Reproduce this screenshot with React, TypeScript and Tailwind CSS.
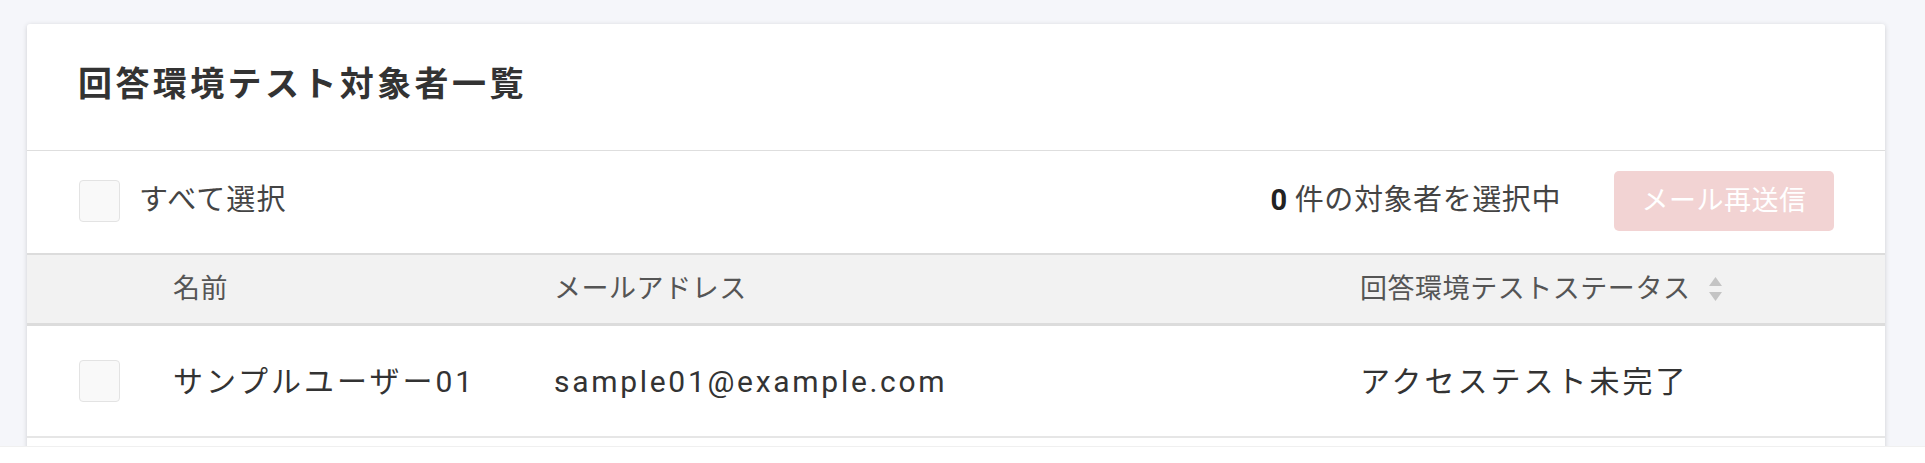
import React from "react";

const font = { fontFamily: 'Roboto, "Noto Sans CJK JP", sans-serif' };

function Box() {
  return <div className="w-[41px] h-[42px] rounded-[4px] border border-[#e3e3e3] bg-[#f9f9f9] shrink-0" />;
}

function SortIcon() {
  return (
    <svg width="13" height="24" viewBox="0 0 13 24" className="ml-[19px]">
      <polygon points="6.5,0 13,9 0,9" fill="#c4c4c4" />
      <polygon points="0,15 13,15 6.5,24" fill="#c4c4c4" />
    </svg>
  );
}

export default function App() {
  return (
    <div className="bg-white w-[1925px] h-[463px] overflow-hidden" style={font}>
      <div className="bg-[#f5f6fa] h-[446px] pt-[24px] overflow-hidden">
        <div className="ml-[27px] w-[1858px] bg-white rounded-[3px] shadow-[0_1px_5px_rgba(0,0,0,0.16)]">
          <div className="h-[127px] border-b border-[#dedede] flex items-center pl-[51px] pb-[6px]">
            <h1 className="text-[34px] font-bold tracking-[0.1em] text-[#333]">回答環境テスト対象者一覧</h1>
          </div>
          <div className="h-[102px] flex items-center pl-[52px] pr-[51px] pb-[2px]">
            <Box />
            <span className="ml-[19px] text-[29px] tracking-[0.04em] text-[#444]">すべて選択</span>
            <div className="ml-auto flex items-center">
              <span className="text-[29px] tracking-[0.02em] text-[#444]">
                <b className="font-bold text-[#222] mr-[7px]">0</b>件の対象者を選択中
              </span>
              <button className="ml-[53px] w-[220px] h-[60px] rounded-[5px] bg-[#f2d3d3] text-white text-[27px] tracking-[0.02em] flex items-center justify-center">
                メール再送信
              </button>
            </div>
          </div>
          <div className="grid grid-cols-[146px_381px_808px_1fr] h-[73px] bg-[#f2f2f2] border-t-2 border-b-[3px] border-[#dcdcdc] items-center text-[27px] text-[#555] tracking-[0.02em]">
            <div />
            <div>名前</div>
            <div>メールアドレス</div>
            <div className="flex items-center -ml-[2px]">回答環境テストステータス<SortIcon /></div>
          </div>
          <div className="grid grid-cols-[146px_381px_808px_1fr] h-[112px] border-b-2 border-[#e6e6e6] items-center text-[30px] text-[#333] tracking-[0.1em]">
            <div className="pl-[52px]"><Box /></div>
            <div>サンプルユーザー01</div>
            <div className="tracking-[0.09em]">sample01@example.com</div>
            <div className="-ml-[2px]">アクセステスト未完了</div>
          </div>
          <div className="h-[20px]" />
        </div>
      </div>
      <div className="border-t border-[#f0f0f0]" />
    </div>
  );
}
